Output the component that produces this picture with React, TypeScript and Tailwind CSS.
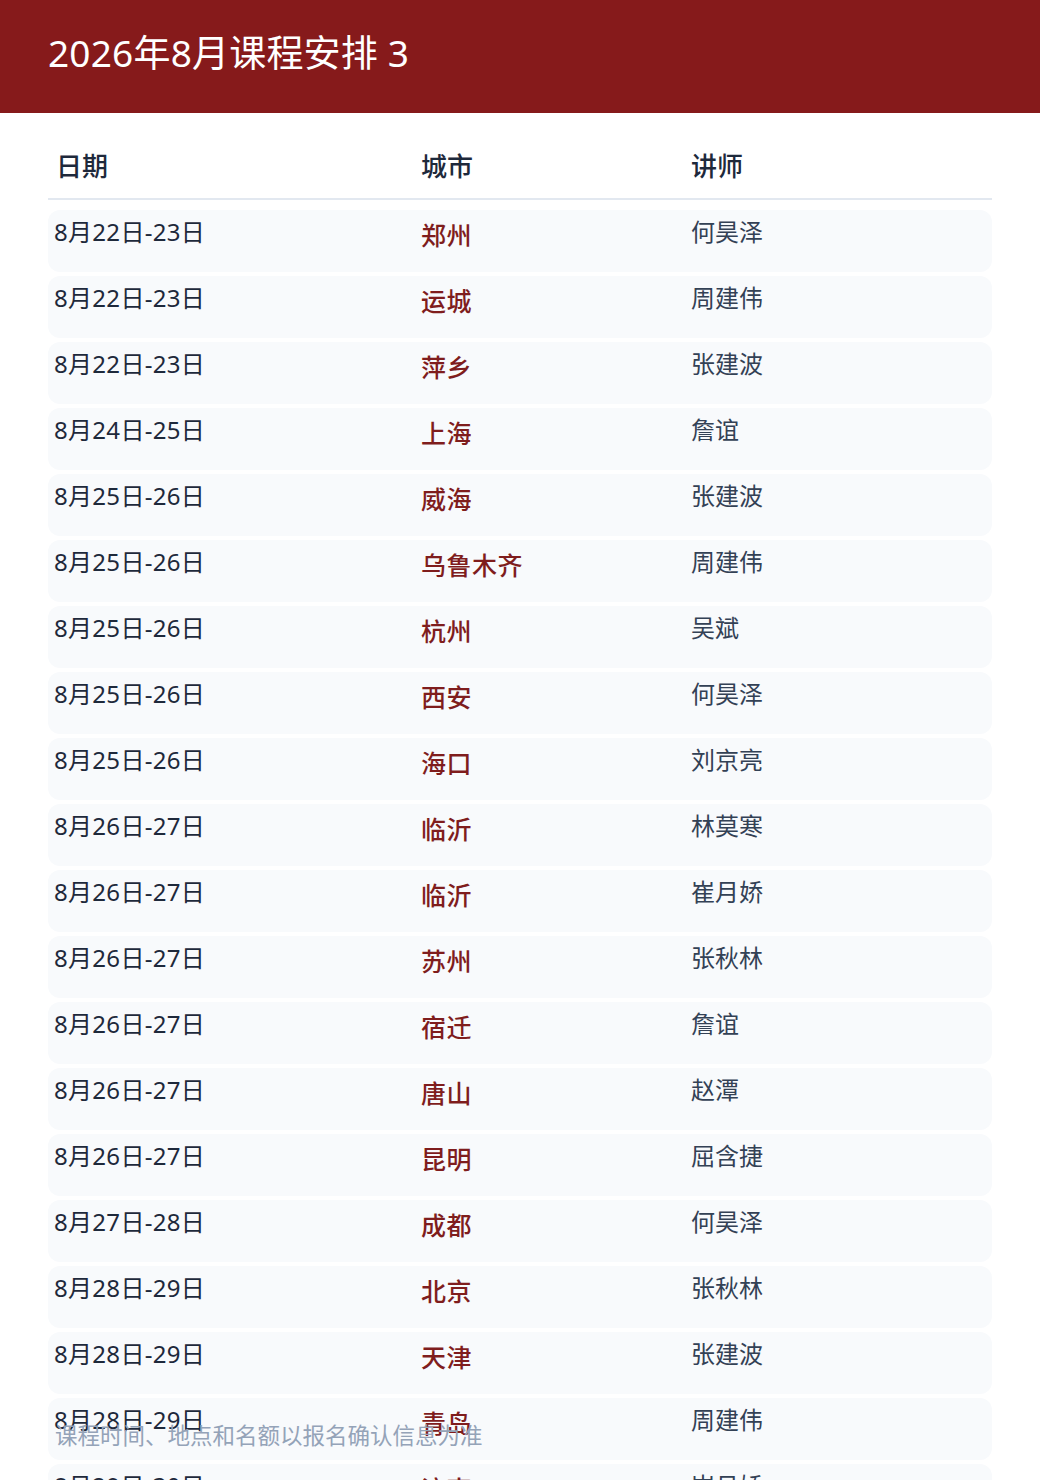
const rows: [string, string, string][] = [
  ["8月22日-23日", "郑州", "何昊泽"],
  ["8月22日-23日", "运城", "周建伟"],
  ["8月22日-23日", "萍乡", "张建波"],
  ["8月24日-25日", "上海", "詹谊"],
  ["8月25日-26日", "威海", "张建波"],
  ["8月25日-26日", "乌鲁木齐", "周建伟"],
  ["8月25日-26日", "杭州", "吴斌"],
  ["8月25日-26日", "西安", "何昊泽"],
  ["8月25日-26日", "海口", "刘京亮"],
  ["8月26日-27日", "临沂", "林莫寒"],
  ["8月26日-27日", "临沂", "崔月娇"],
  ["8月26日-27日", "苏州", "张秋林"],
  ["8月26日-27日", "宿迁", "詹谊"],
  ["8月26日-27日", "唐山", "赵潭"],
  ["8月26日-27日", "昆明", "屈含捷"],
  ["8月27日-28日", "成都", "何昊泽"],
  ["8月28日-29日", "北京", "张秋林"],
  ["8月28日-29日", "天津", "张建波"],
  ["8月28日-29日", "青岛", "周建伟"],
  ["8月29日-30日", "济南", "崔月娇"],
];

export default function App() {
  return (
    <div
      className="relative h-[1480px] overflow-hidden bg-white text-[#1e293b]"
      style={{ fontFamily: '"Noto Sans", "Noto Sans CJK SC", sans-serif' }}
    >
      <header className="flex h-[113px] items-center bg-[#861a1b] px-12">
        <h1 className="pb-[8px] text-[37px] font-normal leading-none tracking-[0.2px] text-white">
          2026年8月课程安排 3
        </h1>
      </header>

      <div className="mx-12 mt-[26px]">
        <div className="flex h-[61px] items-center border-b-2 border-[#e2e8f0] pb-[5px] text-[26px] font-medium text-[#1e293b]">
          <div className="w-[367px] pl-[8px]">日期</div>
          <div className="w-[270px] pl-[6px]">城市</div>
          <div className="pl-[6px]">讲师</div>
        </div>

        <ol className="mt-[10px] flex flex-col gap-1">
          {rows.map(([date, city, teacher], i) => (
            <li key={i} className="flex h-[62px] rounded-xl bg-[#f8fafc] pt-[10px] leading-[24px]">
              <div className="w-[367px] pl-[6px] text-[24px] tracking-[0.3px] text-[#1e293b]">{date}</div>
              <div className="w-[270px] pl-[6px] pt-[3px] text-[25px] font-medium tracking-[0.5px] text-[#7f1d1d]">
                {city}
              </div>
              <div className="pl-[6px] text-[24px] text-[#334155]">{teacher}</div>
            </li>
          ))}
        </ol>
      </div>

      <p className="absolute left-[55px] top-[1421px] text-[22.5px] leading-[30px] text-[#94a3b8]">
        课程时间、地点和名额以报名确认信息为准
      </p>
    </div>
  );
}
